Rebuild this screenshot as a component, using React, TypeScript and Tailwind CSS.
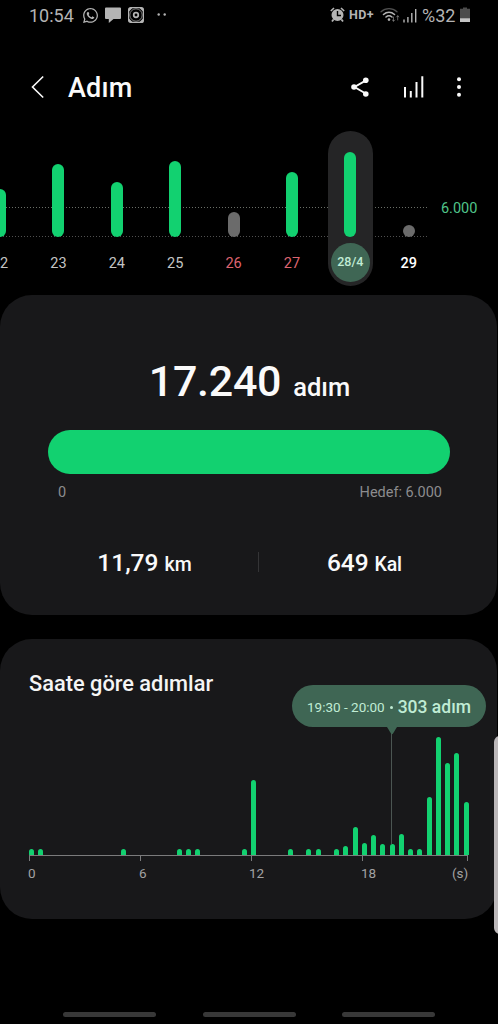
import clsx from "clsx";
import { FaWhatsapp } from "react-icons/fa";

type Day = {
  label: string;
  height: number;
  kind?: "weekend" | "selected" | "today";
  missed?: boolean;
};

const days: Day[] = [
  { label: "22", height: 48 },
  { label: "23", height: 73 },
  { label: "24", height: 55 },
  { label: "25", height: 76 },
  { label: "26", height: 25, kind: "weekend", missed: true },
  { label: "27", height: 65, kind: "weekend" },
  { label: "28/4", height: 85, kind: "selected" },
  { label: "29", height: 12, kind: "today", missed: true },
];

// half hour slot -> bar height
const slots: Record<number, number> = {
  0: 6, 1: 6, 10: 6, 16: 6, 17: 6, 18: 6, 23: 6, 24: 75, 28: 6, 30: 6, 31: 6,
  33: 6, 34: 9, 35: 28, 36: 12, 37: 20, 38: 11, 39: 11, 40: 21, 41: 6, 42: 6,
  43: 58, 44: 118, 45: 92, 46: 102, 47: 53,
};

const StatusBar = () => (
  <div className="flex h-[30px] items-center pl-[29px] pr-[28px] text-[#b4b4b4]">
    <span className="w-[53px] pt-px text-[18px] leading-[30px]">10:54</span>
    <FaWhatsapp className="size-[17px]" />
    <svg className="ml-[6px] size-4" viewBox="0 0 16 16" fill="currentColor">
      <path d="M1 .5h14a1 1 0 0 1 1 1v9.500a1 1 0 0 1-1 1H8.500L3.800 16V12H1a1 1 0 0 1-1-1V1.500a1 1 0 0 1 1-1z" />
    </svg>
    <svg className="ml-[7px] size-4" viewBox="0 0 16 16" fill="none" stroke="currentColor">
      <rect x=".6" y=".6" width="14.800" height="14.800" rx="2" strokeWidth="1.200" />
      <path d="M1 4.500V1h3.500zM11.500 1H15v3.500zM1 11.500V15h3.500zM15 11.500V15h-3.500z" fill="currentColor" stroke="none" />
      <circle cx="8" cy="8" r="6.200" strokeWidth=".7" />
      <circle cx="8" cy="8" r="2.300" strokeWidth="1.700" />
    </svg>
    <svg className="ml-[12px] h-4 w-3" viewBox="0 0 12 16" fill="currentColor">
      <circle cx="2.700" cy="7.500" r="1.200" />
      <circle cx="8.700" cy="7.500" r="1.200" />
    </svg>
    <svg className="ml-auto h-4 w-[15px]" viewBox="0 0 15 16" fill="none" stroke="currentColor">
      <circle cx="7.500" cy="8" r="6" fill="currentColor" stroke="none" />
      <path d="M.8 4L4 1M14.200 4L11 1" strokeWidth="1.600" />
      <path d="M3.500 12.500L2 14.500M11.500 12.500L13 14.500" strokeWidth="1.800" />
      <path d="M7.500 4v4.500h3.500" stroke="#000" strokeWidth="1.400" />
    </svg>
    <span className="ml-[4px] w-[27px] text-[12.5px] font-bold tracking-[0.4px]">HD+</span>
    <svg className="ml-[4px] h-4 w-5" viewBox="0 0 20 16" fill="none" stroke="currentColor" strokeLinecap="round">
      <path d="M1 4.800c4.700-4.200 11.300-4.200 16 0" strokeWidth="1.300" opacity=".45" />
      <path d="M3.500 7.500c3.300-2.900 7.700-2.900 11 0" strokeWidth="1.600" />
      <path d="M6 10c1.900-1.600 4.100-1.600 6 0" strokeWidth="1.600" />
      <circle cx="9" cy="12.600" r="1.300" fill="currentColor" stroke="none" />
      <path d="M13.500 10v4M12.300 13l1.200 1.200 1.200-1.200M17.700 13V8.800M16.500 10l1.200-1.200L18.900 10" strokeWidth=".9" opacity=".6" />
    </svg>
    <svg className="ml-[3px] h-4 w-[14px]" viewBox="0 0 14 16" stroke="currentColor" strokeWidth="1.400">
      <path d="M1 15.500v-3M4.900 15.500V10M8.800 15.500V6M12.700 15.500V2" />
    </svg>
    <span className="ml-[5px] w-[36px] pt-px text-[18px] leading-[30px]">%32</span>
    <svg className="ml-[2px] h-4 w-[10px]" viewBox="0 0 10 16">
      <path d="M3 .5h4v1.300h3V15H0V1.800h3z" fill="#4c4c4c" />
      <path d="M0 11.300h10V15H0z" fill="#c4c4c4" />
    </svg>
  </div>
);

const Header = () => (
  <header className="flex h-[101px] items-center pl-[31px] pr-[34px] pt-[13px] text-[#fafafa]">
    <svg className="h-6 w-[14px]" viewBox="0 0 14 24" fill="none" stroke="currentColor" strokeWidth="1.600">
      <path d="M12.200 1.500L1.500 12l10.700 10.500" />
    </svg>
    <h1 className="ml-[23px] mt-[2px] text-[27px] font-medium leading-8 tracking-[0.2px]">Adım</h1>
    <svg className="ml-auto h-[22px] w-5" viewBox="0 0 20 22" fill="currentColor">
      <path d="M16.500 4.200L4.500 11l12 7" fill="none" stroke="currentColor" strokeWidth="1.900" />
      <circle cx="4" cy="11" r="2.800" />
      <circle cx="15.800" cy="4.200" r="2.800" />
      <circle cx="15.800" cy="18" r="2.800" />
    </svg>
    <svg className="ml-[33px] h-[22px] w-[21px]" viewBox="0 0 21 22" stroke="currentColor" strokeWidth="2">
      <path d="M2 21.500V11M7.800 21.500V15M13.500 21.500V6M19.300 21.500V.3" />
    </svg>
    <svg className="ml-[30px] h-[22px] w-[10px]" viewBox="0 0 10 22" fill="currentColor">
      <circle cx="5" cy="3.200" r="2" />
      <circle cx="5" cy="11" r="2" />
      <circle cx="5" cy="18.700" r="2" />
    </svg>
  </header>
);

const DayColumn = ({ label, height, kind, missed }: Day) => (
  <div className="flex w-[58.4px] shrink-0 justify-center">
    <div
      className={clsx(
        "flex h-[155px] w-[45px] flex-col items-center justify-end rounded-full",
        kind === "selected" && "bg-[#252526]"
      )}
    >
      <div
        className={clsx("w-3 rounded-full", missed ? "bg-[#6b6b6b]" : "bg-[#12d170]")}
        style={{ height }}
      />
      <span
        className={clsx(
          "mb-[4px] mt-[6px] flex size-[39px] items-center justify-center rounded-full",
          kind === "selected" ? "text-[12.5px]" : "pt-[2px] text-[14.5px]",
          !kind && "text-[#c4c4c4]",
          kind === "weekend" && "text-[#dc6470]",
          kind === "today" && "font-medium text-white",
          kind === "selected" && "bg-[#3f6654] font-medium text-[#c0ecd4]"
        )}
      >
        {label}
      </span>
    </div>
  </div>
);

const WeekChart = () => (
  <section className="relative flex h-[164px] overflow-hidden">
    <svg className="absolute left-0 top-0 h-[120px] w-[427px]" stroke="#6a6f68" strokeDasharray="1 2">
      <path d="M0 76.500h427" />
      <path d="M0 105.500h427" stroke="#505050" />
    </svg>
    <div className="relative -ml-[29.2px] flex shrink-0">
      {days.map((day) => (
        <DayColumn key={day.label} {...day} />
      ))}
    </div>
    <span className="ml-[3px] mt-[68px] text-[14.5px] leading-5 text-[#50c489]">6.000</span>
  </section>
);

const Summary = () => (
  <section className="mr-px h-[320px] rounded-[32px] bg-[#18181a] px-12 pt-[60px] text-[#fafafa]">
    <div className="flex h-[52px] items-baseline justify-center pl-[2px] font-medium leading-[52px]">
      <span className="text-[43px] tracking-[-0.3px]">17.240</span>
      <span className="ml-[12px] text-[25.5px]">adım</span>
    </div>
    <div className="mt-[23px] h-[44px] w-[402px] rounded-full bg-[#12d170]" />
    <div className="mt-[9px] flex justify-between pl-[10px] pr-[7px] text-[14.5px] leading-5 text-[#8c8c8e]">
      <span>0</span>
      <span>Hedef: 6.000</span>
    </div>
    <div className="mt-[44px] flex h-[30px] items-center font-medium leading-[30px]">
      <p className="w-[210px] pr-[17px] pt-[3px] text-center text-[24.5px]">
        11,79 <span className="text-[19.5px]">km</span>
      </p>
      <div className="h-5 w-px bg-[#343436]" />
      <p className="grow pl-[21px] pt-[3px] text-center text-[24.5px] tracking-[-0.1px]">
        649 <span className="text-[19.5px]">Kal</span>
      </p>
    </div>
  </section>
);

const HourlySteps = () => (
  <section className="relative mr-px mt-[24px] h-[280px] rounded-[32px] bg-[#18181a] pt-[31px]">
    <h2 className="pl-[29px] text-[21.8px] font-medium leading-7 text-[#f5f5f5]">
      Saate göre adımlar
    </h2>
    <div className="absolute left-[391px] top-[88px] h-[117px] w-px bg-[#4b5552]" />
    <div className="ml-[26.7px] mt-[37px] flex h-[120px] w-[443.8px] items-end">
      {Array.from({ length: 48 }, (_, i) => (
        <div key={i} className="flex flex-1 justify-center">
          <div className="w-[5px] rounded-t-[2.5px] bg-[#12d170]" style={{ height: slots[i] ?? 0 }} />
        </div>
      ))}
    </div>
    <svg className="ml-[29px] h-2 w-[439px]" stroke="#7b7b7c" fill="none">
      <path d="M0 .5h439" strokeWidth="1.200" />
      <path d="M.5 1v5M111.500 1v5M222.500 1v5M333.500 1v5M438.500 1v5" />
    </svg>
    <div className="ml-[28px] flex text-[13.5px] leading-5 text-[#a2a2a3]">
      <span className="w-[111px]">0</span>
      <span className="w-[110px]">6</span>
      <span className="w-[112px]">12</span>
      <span className="w-[91px]">18</span>
      <span>(s)</span>
    </div>
    <div className="absolute left-[292px] top-[46px] flex h-[42px] w-[194px] items-center justify-center rounded-[21px] bg-[#3f6654] pt-[2px] text-[#c0ecd4]">
      <span className="text-[13.5px]">19:30 - 20:00</span>
      <span className="ml-[5px] mr-[5px] size-[3px] rounded-full bg-[#c0ecd4]" />
      <span className="text-[17.5px] font-medium">303 adım</span>
      <svg className="absolute left-[95px] top-[42px] h-2 w-[10px]" viewBox="0 0 10 8" fill="#3f6654">
        <path d="M0 0h10L6 6.500q-1 1.300-2 0z" />
      </svg>
    </div>
  </section>
);

const App = () => (
  <main className="relative flex h-[1024px] w-[498px] flex-col overflow-hidden bg-black font-[Roboto,sans-serif]">
    <StatusBar />
    <Header />
    <WeekChart />
    <Summary />
    <HourlySteps />
    <div className="absolute left-[493.5px] top-[736px] h-[198px] w-2 rounded-l-[6px] bg-[#bcb8ba]" />
    <nav className="mt-auto flex h-[12px] justify-between px-[63px]">
      <div className="h-[5px] w-[93px] rounded-full bg-[#383838]" />
      <div className="h-[5px] w-[93px] rounded-full bg-[#383838]" />
      <div className="h-[5px] w-[93px] rounded-full bg-[#383838]" />
    </nav>
  </main>
);

export default App;
